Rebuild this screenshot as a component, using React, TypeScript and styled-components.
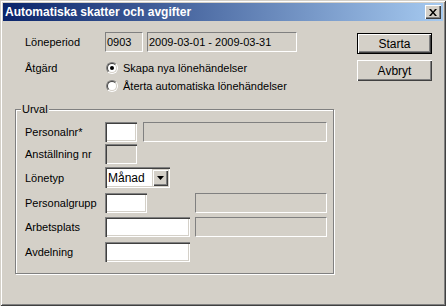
import React from "react";
import styled, { createGlobalStyle } from "styled-components";

const Global = createGlobalStyle`
  html, body { margin: 0; padding: 0; background: #d4d0c8; }
  body {
    font-family: "Liberation Sans", Arial, sans-serif;
    font-size: 11px;
    color: #000;
  }
  * { box-sizing: border-box; }
`;

const Window = styled.div`
  width: 446px;
  height: 306px;
  padding: 3px;
  background: #d4d0c8;
  box-shadow: inset 1px 1px #d4d0c8, inset -1px -1px #404040,
    inset 2px 2px #fff, inset -2px -2px #808080;
  display: flex;
  flex-direction: column;
`;

const TitleBar = styled.div`
  height: 18px;
  flex: none;
  display: flex;
  align-items: center;
  justify-content: space-between;
  padding: 0 2px;
  background: linear-gradient(to right, #0a246a, #a6caf0);
  color: #fff;
  font-weight: bold;
  font-size: 12px;
`;

const TitleText = styled.span`
  white-space: nowrap;
  line-height: 18px;
`;

const CaptionButton = styled.div`
  width: 16px;
  height: 14px;
  background: #d4d0c8;
  box-shadow: inset 1px 1px #fff, inset -1px -1px #404040, inset -2px -2px #808080;
  display: flex;
  align-items: center;
  justify-content: center;
`;

const Body = styled.div`
  flex: 1;
  display: flex;
  padding: 11px 0 0 12px;
`;

const LeftCol = styled.div`
  width: 319px;
  flex: none;
  display: flex;
  flex-direction: column;
`;

const TopSection = styled.div`
  padding-left: 10px;
  display: flex;
  flex-direction: column;
`;

const Row = styled.div<{ $h?: number; $mt?: number }>`
  display: flex;
  align-items: center;
  height: ${(p) => p.$h ?? 20}px;
  margin-top: ${(p) => p.$mt ?? 0}px;
`;

const Label = styled.span`
  width: 80px;
  flex: none;
  white-space: nowrap;
`;

const ReadBox = styled.div<{ $w?: number; $ml?: number; $auto?: boolean }>`
  height: 20px;
  width: ${(p) => (p.$w ? `${p.$w}px` : "auto")};
  flex: ${(p) => (p.$w ? "none" : "1")};
  margin-left: ${(p) => (p.$auto ? "auto" : `${p.$ml ?? 0}px`)};
  border: 1px solid;
  border-color: #808080 #fff #fff #808080;
  padding: 0 1px;
  display: flex;
  align-items: center;
  white-space: nowrap;
  overflow: hidden;
`;

const EditBox = styled.div<{ $w: number; $disabled?: boolean }>`
  height: 20px;
  width: ${(p) => p.$w}px;
  flex: none;
  background: ${(p) => (p.$disabled ? "#d4d0c8" : "#fff")};
  box-shadow: inset 1px 1px #808080, inset 2px 2px #404040,
    inset -1px -1px #fff, inset -2px -2px #d4d0c8;
`;

const RadioGroup = styled.div`
  display: flex;
  flex-direction: column;
`;

const RadioRow = styled.label`
  display: flex;
  align-items: center;
  height: 18px;
  margin-left: 1px;
  gap: 5px;
  white-space: nowrap;
`;

const RadioCircle = styled.span<{ $checked?: boolean }>`
  position: relative;
  width: 12px;
  height: 12px;
  flex: none;
  border-radius: 50%;
  border: 1px solid;
  border-color: #808080 #fff #fff #808080;
  &::before {
    content: "";
    position: absolute;
    inset: 0;
    border-radius: 50%;
    border: 1px solid;
    border-color: #404040 #d4d0c8 #d4d0c8 #404040;
    background: #fff;
  }
  &::after {
    content: "";
    display: ${(p) => (p.$checked ? "block" : "none")};
    position: absolute;
    left: 3px;
    top: 3px;
    width: 4px;
    height: 4px;
    border-radius: 50%;
    background: #000;
  }
`;

const GroupBox = styled.div`
  position: relative;
  margin-top: 14px;
  height: 165px;
  border: 1px solid #808080;
  box-shadow: inset 1px 1px #fff, 1px 1px #fff;
  padding: 12px 6px 0 9px;
  display: flex;
  flex-direction: column;
`;

const Legend = styled.span`
  position: absolute;
  top: -8px;
  left: 5px;
  padding: 0 1px;
  line-height: 14px;
  background: #d4d0c8;
`;

const Combo = styled.div`
  width: 65px;
  height: 21px;
  flex: none;
  padding: 2px;
  display: flex;
  background: #fff;
  box-shadow: inset 1px 1px #808080, inset 2px 2px #404040,
    inset -1px -1px #fff, inset -2px -2px #d4d0c8;
`;

const ComboText = styled.span`
  flex: 1;
  padding-left: 1px;
  display: flex;
  align-items: center;
  font-size: 12px;
`;

const DropButton = styled.div`
  width: 16px;
  flex: none;
  background: #d4d0c8;
  box-shadow: inset 1px 1px #d4d0c8, inset 2px 2px #fff,
    inset -1px -1px #404040, inset -2px -2px #808080;
  display: flex;
  align-items: center;
  justify-content: center;
`;

const ButtonCol = styled.div`
  margin-left: 23px;
  margin-top: 1px;
  display: flex;
  flex-direction: column;
  gap: 6px;
`;

const Button = styled.button<{ $default?: boolean }>`
  width: 75px;
  height: 21px;
  font: inherit;
  font-size: 12px;
  color: #000;
  background: #d4d0c8;
  padding: 0;
  border: ${(p) => (p.$default ? "1px solid #000" : "none")};
  box-shadow: inset 1px 1px #fff, inset -1px -1px #404040, inset -2px -2px #808080;
`;

export default function App() {
  return (
    <>
      <Global />
      <Window>
        <TitleBar>
          <TitleText>Automatiska skatter och avgifter</TitleText>
          <CaptionButton>
            <svg width="8" height="7" viewBox="0 0 8 7">
              <path d="M0 0h2l2 2.5L6 0h2L5 3.5 8 7H6L4 4.5 2 7H0l3-3.5z" fill="#000" />
            </svg>
          </CaptionButton>
        </TitleBar>
        <Body>
          <LeftCol>
            <TopSection>
              <Row>
                <Label>Löneperiod</Label>
                <ReadBox $w={38}>0903</ReadBox>
                <ReadBox $w={150} $ml={4}>2009-03-01 - 2009-03-31</ReadBox>
              </Row>
              <Row $h={36} $mt={7} style={{ alignItems: "flex-start" }}>
                <Label style={{ lineHeight: "18px" }}>Åtgärd</Label>
                <RadioGroup>
                  <RadioRow>
                    <RadioCircle $checked />
                    Skapa nya lönehändelser
                  </RadioRow>
                  <RadioRow>
                    <RadioCircle />
                    Återta automatiska lönehändelser
                  </RadioRow>
                </RadioGroup>
              </Row>
            </TopSection>
            <GroupBox>
              <Legend>Urval</Legend>
              <Row>
                <Label>Personalnr*</Label>
                <EditBox $w={32} />
                <ReadBox $ml={6} />
              </Row>
              <Row $mt={2}>
                <Label>Anställning nr</Label>
                <EditBox $w={32} $disabled />
              </Row>
              <Row $mt={3} $h={21}>
                <Label>Lönetyp</Label>
                <Combo>
                  <ComboText>Månad</ComboText>
                  <DropButton>
                    <svg width="7" height="4" viewBox="0 0 7 4">
                      <path d="M0 0h7L3.5 4z" fill="#000" />
                    </svg>
                  </DropButton>
                </Combo>
              </Row>
              <Row $mt={5}>
                <Label>Personalgrupp</Label>
                <EditBox $w={42} />
                <ReadBox $w={132} $auto />
              </Row>
              <Row $mt={4}>
                <Label>Arbetsplats</Label>
                <EditBox $w={85} />
                <ReadBox $w={132} $auto />
              </Row>
              <Row $mt={5}>
                <Label>Avdelning</Label>
                <EditBox $w={85} />
              </Row>
            </GroupBox>
          </LeftCol>
          <ButtonCol>
            <Button $default>Starta</Button>
            <Button>Avbryt</Button>
          </ButtonCol>
        </Body>
      </Window>
    </>
  );
}
